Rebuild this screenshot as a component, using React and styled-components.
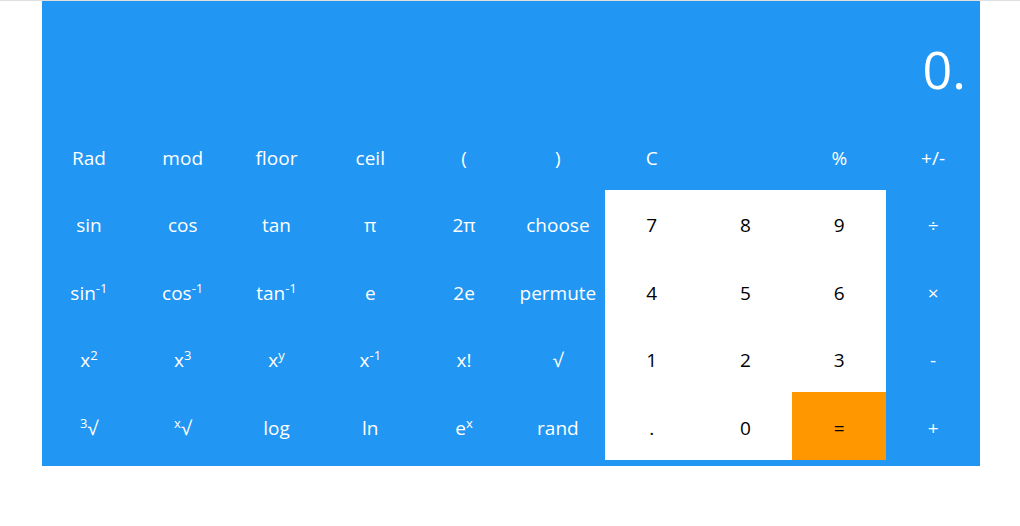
import React from "react";
import styled, { createGlobalStyle } from "styled-components";

const GlobalStyle = createGlobalStyle`
  body {
    margin: 0;
    border-top: 1px solid #e0e0e0;
    background: #ffffff;
    font-family: "Open Sans", "Noto Sans", sans-serif;
  }
`;

const Calculator = styled.div`
  width: 938px;
  margin-left: 42px;
  padding-bottom: 6px;
  background-color: #2196f3;
`;

const Display = styled.div`
  height: 121px;
  display: flex;
  align-items: flex-end;
  justify-content: flex-end;
  padding: 0 14px 27px 0;
  box-sizing: border-box;
  color: #ffffff;
  font-size: 52px;
  line-height: 1;
`;

const Keys = styled.div`
  display: grid;
  grid-template-columns: repeat(10, 1fr);
  grid-auto-rows: 67.5px;
`;

const Key = styled.div`
  display: flex;
  align-items: center;
  justify-content: center;
  padding-top: 5px;
  box-sizing: border-box;
  font-size: 19px;
  color: ${(p) => (p.$kind === "blue" ? "#ffffff" : "#000000")};
  background-color: ${(p) =>
    p.$kind === "digit" ? "#ffffff" : p.$kind === "equals" ? "#ff9800" : "transparent"};
`;

const Label = styled.span`
  line-height: 1.3;

  sup {
    font-size: 13px;
    line-height: 0;
    vertical-align: 7px;
  }
`;

const rows = [
  ["Rad", "mod", "floor", "ceil", "(", ")", "C", "", "%", "+/-"],
  [
    "sin", "cos", "tan", "π", "2π", "choose",
    { t: "7", k: "digit" }, { t: "8", k: "digit" }, { t: "9", k: "digit" }, "÷",
  ],
  [
    <>sin<sup>-1</sup></>, <>cos<sup>-1</sup></>, <>tan<sup>-1</sup></>, "e", "2e", "permute",
    { t: "4", k: "digit" }, { t: "5", k: "digit" }, { t: "6", k: "digit" }, "×",
  ],
  [
    <>x<sup>2</sup></>, <>x<sup>3</sup></>, <>x<sup>y</sup></>, <>x<sup>-1</sup></>, "x!", "√",
    { t: "1", k: "digit" }, { t: "2", k: "digit" }, { t: "3", k: "digit" }, "-",
  ],
  [
    <><sup>3</sup>√</>, <><sup>x</sup>√</>, "log", "ln", <>e<sup>x</sup></>, "rand",
    { t: ".", k: "digit" }, { t: "0", k: "digit" }, { t: "=", k: "equals" }, "+",
  ],
];

export default function App() {
  return (
    <>
      <GlobalStyle />
      <Calculator>
        <Display>0.</Display>
        <Keys>
          {rows.flat().map((item, i) => {
            const isObj = item && typeof item === "object" && "t" in item;
            return (
              <Key key={i} $kind={isObj ? item.k : "blue"}>
                <Label>{isObj ? item.t : item}</Label>
              </Key>
            );
          })}
        </Keys>
      </Calculator>
    </>
  );
}
